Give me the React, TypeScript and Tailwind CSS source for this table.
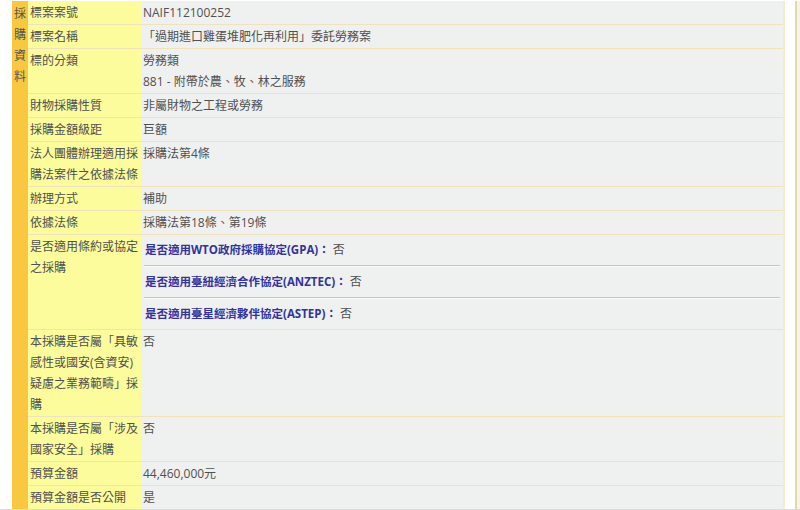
const rows: { label: string; value: React.ReactNode }[] = [
  { label: "標案案號", value: "NAIF112100252" },
  { label: "標案名稱", value: "「過期進口雞蛋堆肥化再利用」委託勞務案" },
  {
    label: "標的分類",
    value: (
      <>
        <div>勞務類</div>
        <div>881 - 附帶於農、牧、林之服務</div>
      </>
    ),
  },
  { label: "財物採購性質", value: "非屬財物之工程或勞務" },
  { label: "採購金額級距", value: "巨額" },
  { label: "法人團體辦理適用採購法案件之依據法條", value: "採購法第4條" },
  { label: "辦理方式", value: "補助" },
  { label: "依據法條", value: "採購法第18條、第19條" },
  { label: "是否適用條約或協定之採購", value: "treaty" },
  { label: "本採購是否屬「具敏感性或國安(含資安)疑慮之業務範疇」採購", value: "否" },
  { label: "本採購是否屬「涉及國家安全」採購", value: "否" },
  { label: "預算金額", value: "44,460,000元" },
  { label: "預算金額是否公開", value: "是" },
];

const treaties = [
  "是否適用WTO政府採購協定(GPA)：",
  "是否適用臺紐經濟合作協定(ANZTEC)：",
  "是否適用臺星經濟夥伴協定(ASTEP)：",
];

function TreatyCell() {
  return (
    <div className="px-[1px]">
      {treaties.map((t, i) => (
        <div key={t}>
          {i > 0 && <div className="h-0 border-t border-b border-t-[#c4c7c7] border-b-[#f9f9f9]" />}
          <div className="py-[4px] pl-[1px] leading-[22px]">
            <span className="text-[11.5px] font-bold text-[#33339c]">{t}</span>
            <span> 否</span>
          </div>
        </div>
      ))}
    </div>
  );
}

export default function App() {
  return (
    <div
      className="h-[510px] w-[800px] overflow-hidden bg-white border-b border-[#dcdcdc] text-[12px] text-[#505050]"
      style={{ fontFamily: '"Open Sans", "Noto Sans CJK TC", sans-serif' }}
    >
      <div className="flex h-full pl-[12px] pt-[1px]">
        <div className="flex w-[16px] shrink-0 flex-col items-center bg-[#f9c840] pt-[2px] leading-[21px] text-[#555]">
          <span>採</span>
          <span>購</span>
          <span>資</span>
          <span>料</span>
        </div>

        <div className="w-[757px] shrink-0 border-r-2 border-[#f6edc8]">
          {rows.map((r) => (
            <div key={r.label} className="flex border-b border-[#efe2bd]">
              <div className="w-[113px] shrink-0 bg-[#fcfc9c] px-[2px] py-[1px] leading-[21px]">
                {r.label}
              </div>
              {r.value === "treaty" ? (
                <div className="flex-1 bg-[#eff0f0] px-[2px]">
                  <TreatyCell />
                </div>
              ) : (
                <div className="flex-1 bg-[#eff0f0] px-[2px] py-[1px] leading-[21px]">{r.value}</div>
              )}
            </div>
          ))}
        </div>

        <div className="w-[10px] shrink-0" />
        <div className="w-[5px] shrink-0 border-l-2 border-[#e2d9b0] bg-[#f8f4e2]" />
      </div>
    </div>
  );
}
